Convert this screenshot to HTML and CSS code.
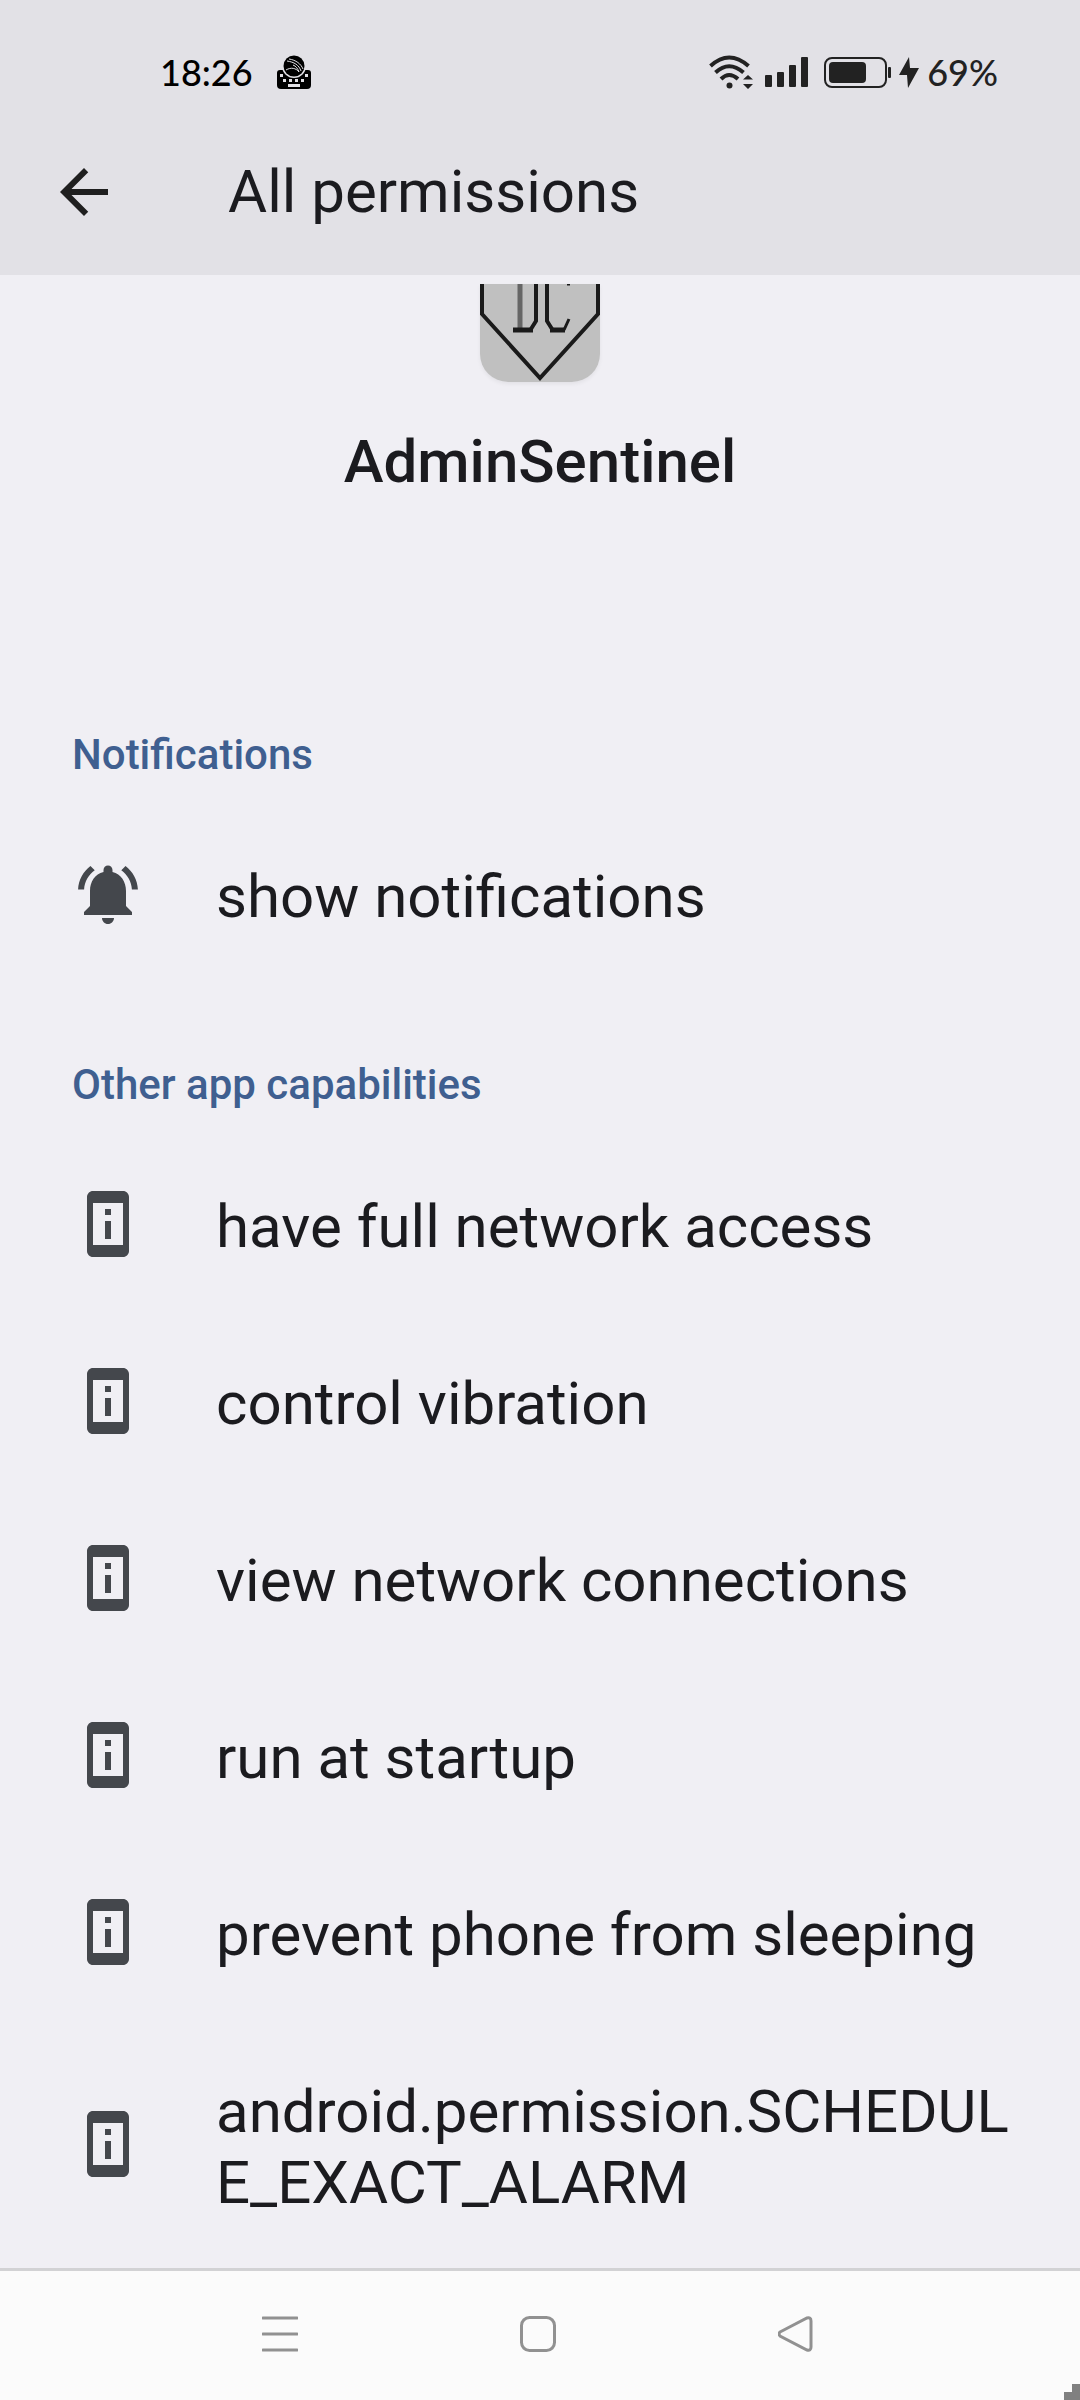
FILE: index.html
```html
<!DOCTYPE html>
<html lang="en">
<head>
    <meta charset="UTF-8">
    <meta name="viewport" content="width=device-width, initial-scale=1.0">
    <title>All permissions</title>

    <link rel="stylesheet" href="styles.css">

</head>
<body>

<!-- shared icon -->
<svg class="icon-defs" aria-hidden="true">
  <symbol id="deviceInfo" viewBox="0 0 24 24">
    <path d="M13 7h-2v2h2V7zm0 4h-2v6h2v-6zm4-10H7c-1.100 0-2 .9-2 2v18c0 1.100.9 2 2 2h10c1.100 0 2-.9 2-2V3c0-1.100-.9-2-2-2zm0 18H7V5h10v14z"/>
  </symbol>
</svg>

<header class="top">
  <div class="status-bar">
    <div class="status-left">
      <span class="status-text">18:26</span>
      <svg class="keyboard-icon" viewBox="0 0 34 34" aria-hidden="true">
        <path d="M3 15h28q3 0 3 3v12q0 4-4 4H4q-4 0-4-4V18q0-3 3-3z"/>
        <circle cx="17" cy="11" r="12" fill="#e2e1e6"/>
        <circle cx="17" cy="11" r="10.500"/>
        <path d="M12 4c7 1 12 5 14 10M10 6c7 1 12 4 14 10M16 10c3 1 5 4 6 7M9 15c5-3 10-2 13 2" fill="none" stroke="#e2e1e6" stroke-width="1"/>
        <path d="M3 19h3v3H3zM28 19h3v3h-3zM6 24h3v3H6zM12 24h3v3h-3zM18 24h3v3h-3zM24 24h3v3h-3zM11 29h12v3H11z" fill="#e2e1e6"/>
      </svg>
    </div>
    <div class="status-right">
      <svg class="wifi-icon" viewBox="0 0 44 34" aria-hidden="true">
        <g fill="none" stroke="#222" stroke-width="4">
          <path d="M1.500 11Q20-6 39.500 11"/>
          <path d="M6.500 17.500Q20 5 34.500 17.500"/>
          <path d="M12 24Q20 16 29 24"/>
        </g>
        <circle cx="20.500" cy="30.500" r="3"/>
        <path d="M34 24.500L39 20l5 4.500zM34 29h10l-5 5z"/>
      </svg>
      <svg class="signal-icon" viewBox="0 0 43 30" aria-hidden="true">
        <rect x="0" y="18" width="7" height="12" rx="1"/>
        <rect x="12" y="15" width="7" height="15" rx="1"/>
        <rect x="24" y="8" width="7" height="22" rx="1"/>
        <rect x="36" y="0" width="7" height="30" rx="1"/>
      </svg>
      <svg class="battery-icon" viewBox="0 0 67 31" aria-hidden="true">
        <rect x="1" y="1" width="61" height="29" rx="7" fill="none" stroke="#222" stroke-width="2"/>
        <rect x="5" y="5" width="37" height="21" rx="4"/>
        <rect x="64" y="10" width="3" height="11" rx="1"/>
      </svg>
      <svg class="bolt-icon" viewBox="0 0 20 31" aria-hidden="true">
        <path d="M10 0L0 18h8l1 13L20 11h-9z"/>
      </svg>
      <span class="status-text">69%</span>
    </div>
  </div>

  <div class="app-bar">
    <button type="button" class="back-btn" aria-label="Back">
      <svg viewBox="0 0 24 24" aria-hidden="true">
        <path d="M20 11H7.830l5.590-5.590L12 4l-8 8 8 8 1.410-1.410L7.830 13H20v-2z"/>
      </svg>
    </button>
    <h1>All permissions</h1>
  </div>
</header>

<main>
  <div class="app-info">
    <svg class="app-icon" viewBox="0 0 120 98" aria-hidden="true">
      <rect width="120" height="98" fill="#c0c0c0"/>
      <g fill="none" stroke="#1a1a1a">
        <path d="M2 0v30l58 64 58-64V0" stroke-width="4"/>
        <path d="M40 0v45" stroke="#666" stroke-width="5"/>
        <path d="M56 0v37l-5 8" stroke-width="4"/>
        <path d="M33 46h20" stroke-width="5"/>
        <path d="M67 0v37l5 8" stroke-width="4"/>
        <path d="M70 46h15" stroke-width="5"/>
        <path d="M84 46l5-11M87 0h3" stroke-width="3"/>
      </g>
    </svg>
    <p class="app-name">AdminSentinel</p>
  </div>

  <section>
    <h2>Notifications</h2>
    <ul>
      <li>
        <svg viewBox="0 0 24 24" aria-hidden="true">
          <path d="M7.580 4.080L6.150 2.650C3.750 4.480 2.170 7.300 2.030 10.500h2c.15-2.650 1.510-4.970 3.550-6.420zm12.390 6.420h2c-.15-3.200-1.730-6.020-4.120-7.850l-1.420 1.430c2.020 1.450 3.390 3.770 3.540 6.420zM18 11c0-3.070-1.640-5.640-4.500-6.320V4c0-.83-.67-1.500-1.500-1.500s-1.500.67-1.500 1.500v.68C7.630 5.360 6 7.920 6 11v5l-2 2v1h16v-1l-2-2v-5zm-8 9c0 1.100.9 2 2 2s2-.9 2-2z"/>
        </svg>
        <span>show notifications</span>
      </li>
    </ul>
  </section>

  <section>
    <h2>Other app capabilities</h2>
    <ul>
      <li>
        <svg aria-hidden="true"><use href="#deviceInfo"/></svg>
        <span>have full network access</span>
      </li>
      <li>
        <svg aria-hidden="true"><use href="#deviceInfo"/></svg>
        <span>control vibration</span>
      </li>
      <li>
        <svg aria-hidden="true"><use href="#deviceInfo"/></svg>
        <span>view network connections</span>
      </li>
      <li>
        <svg aria-hidden="true"><use href="#deviceInfo"/></svg>
        <span>run at startup</span>
      </li>
      <li>
        <svg aria-hidden="true"><use href="#deviceInfo"/></svg>
        <span>prevent phone from sleeping</span>
      </li>
      <li>
        <svg aria-hidden="true"><use href="#deviceInfo"/></svg>
        <span class="long-name">android.permission.SCHEDULE_EXACT_ALARM</span>
      </li>
    </ul>
  </section>
</main>

<nav class="nav-bar">
  <button type="button" aria-label="Recent apps">
    <svg viewBox="0 0 36 36" aria-hidden="true">
      <path d="M1 2h34M1 18h34M1 34h34"/>
    </svg>
  </button>
  <button type="button" aria-label="Home">
    <svg viewBox="0 0 36 36" aria-hidden="true">
      <rect x="1.500" y="1.500" width="33" height="33" rx="8"/>
    </svg>
  </button>
  <button type="button" aria-label="Back">
    <svg viewBox="0 0 36 36" aria-hidden="true">
      <path d="M2 16L29 2q4-1 4 3v26q0 4-4 3L2 20q-2-2 0-4z"/>
    </svg>
  </button>
  <svg class="corner" viewBox="0 0 16 16" aria-hidden="true">
    <path d="M8 0h8v16H0V8h8z"/>
  </svg>
</nav>

</body>
</html>
```
FILE: styles.css
```css
* {
  box-sizing: border-box;
}

body {
  margin: 0;
  padding: 0;
  min-height: 100vh;
  display: flex;
  flex-direction: column;
  font-family: Roboto, 'Liberation Sans', sans-serif;
  font-size: 60px;
  line-height: 71px;
  color: #1b1b1f;
  background-color: #f0eff4;
}

h1,
h2,
p,
ul {
  margin: 0;
  padding: 0;
}

button {
  padding: 0;
  border: none;
  background: none;
  cursor: pointer;
}

svg {
  display: block;
  flex-shrink: 0;
}

.icon-defs {
  position: absolute;
  width: 0;
  height: 0;
}

/* status bar + title */
.top {
  background-color: #e2e1e6;
}

.status-bar {
  display: flex;
  justify-content: space-between;
  align-items: center;
  height: 108px;
  padding: 36px 82px 0 160px;
}

.status-left,
.status-right {
  display: flex;
  align-items: center;
}

.status-left {
  gap: 24px;
}

.status-right {
  gap: 8px;
  color: #222;
  fill: #222;
}

.status-text {
  font-family: Lato, sans-serif;
  font-size: 36px;
  font-weight: 500;
  line-height: 44px;
}

.status-left .status-text {
  color: #000;
}

.keyboard-icon {
  width: 34px;
  height: 34px;
}

.wifi-icon {
  width: 44px;
  height: 34px;
}

.signal-icon {
  width: 43px;
  height: 30px;
  margin: 0 8px 0 4px;
}

.battery-icon {
  width: 67px;
  height: 31px;
}

.bolt-icon {
  width: 20px;
  height: 31px;
}

.app-bar {
  display: flex;
  align-items: center;
  gap: 108px;
  height: 167px;
  padding: 0 48px;
}

.back-btn svg {
  width: 72px;
  height: 72px;
  fill: #1f1f1f;
}

h1 {
  font-size: 60px;
  font-weight: 400;
}

/* content */
main {
  flex: 1;
  padding-top: 9px;
}

.app-info {
  display: flex;
  flex-direction: column;
  align-items: center;
  gap: 44px;
  padding-bottom: 155px;
}

.app-icon {
  width: 120px;
  height: 98px;
  border-radius: 0 0 28px 28px;
  box-shadow: 0 2px 4px rgba(0, 0, 0, 0.06);
}

.app-name {
  font-weight: 500;
}

h2 {
  padding: 78px 72px 25px;
  font-size: 42px;
  font-weight: 500;
  line-height: 50px;
  color: #3f5f90;
}

ul {
  list-style: none;
}

li {
  display: flex;
  align-items: center;
  gap: 72px;
  padding: 0 60px 0 72px;
}

li svg {
  width: 72px;
  height: 72px;
  fill: #44474c;
}

li span {
  padding: 56px 0 50px;
}

.long-name {
  word-break: break-all;
}

/* system navigation */
.nav-bar {
  position: relative;
  display: flex;
  justify-content: center;
  height: 132px;
  padding: 0 4px 3px 0;
  border-top: 3px solid #d2d2d4;
  background-color: #fbfbfb;
}

.nav-bar button {
  display: flex;
  justify-content: center;
  align-items: center;
  width: 258px;
}

.nav-bar button svg {
  width: 36px;
  height: 36px;
  fill: none;
  stroke: #919191;
  stroke-width: 3;
  stroke-linecap: round;
}

.corner {
  position: absolute;
  right: 0;
  bottom: 0;
  width: 16px;
  height: 16px;
  fill: #808080;
}
```
